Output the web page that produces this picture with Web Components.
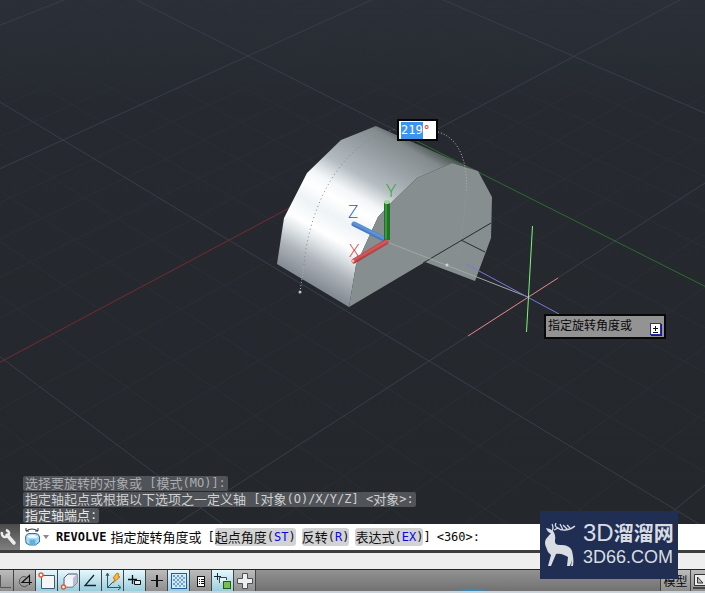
<!DOCTYPE html>
<html lang="zh-CN">
<head>
<meta charset="utf-8">
<title>REVOLVE</title>
<style>
html, body { margin: 0; height: 100%; overflow: hidden; }
body { font-family: "Liberation Sans", "Noto Sans CJK SC", sans-serif; font-size: 13px; }
</style>
</head>
<body>
<cad-app></cad-app>
<script>
const define = (name, html, setup) => customElements.define(name, class extends HTMLElement {
  connectedCallback() {
    if (this.shadowRoot) return;
    const t = document.createElement('template');
    t.innerHTML = html;
    this.attachShadow({ mode: 'open' }).append(t.content.cloneNode(true));
    if (setup) setup(this, this.shadowRoot);
  }
});

// Perspective ground grid: a is the red-axis direction, b the green-axis direction.
function project(a, b) {
  const t = (b + 1) / 2, s = a, d = 1 - 0.1576 * t - 0.0773 * s;
  return [((270.1 * t - 189.9 * s + 248) / d).toFixed(1), ((147 * t + 73.2 * s + 56) / d).toFixed(1)];
}
function gridPaths() {
  let minor = '', major = '';
  for (let i = -20; i <= 20; i++) {
    const k = i / 5;
    const seg = `M${project(k, -5)}L${project(k, i ? 3 : 0)}M${project(-5, k)}L${project(i ? 3.6 : 0, k)}`;
    if (i % 5) minor += seg; else major += seg;
  }
  return `<path d="${minor}" stroke="#2a2f36"/><path d="${major}" stroke="#373e49"/>
    <path d="M${project(0, 0)}L${project(3, 0)}" stroke="#752b30"/><path d="M${project(0, 0)}L${project(0, 3)}" stroke="#2d6a31"/>`;
}

define('cad-scene', `
<style>
:host { display: block; width: 100%; height: 100%; }
svg { display: block; width: 100%; height: 100%; }
text { font: 300 17px Lato, "Noto Sans", sans-serif; }
</style>
<svg viewBox="0 0 705 524" preserveAspectRatio="xMidYMid slice" fill="none" role="img" aria-label="三维视图">
  <defs>
    <linearGradient id="sky" x2="0" y2="1"><stop stop-color="#2b2f37"/><stop offset=".2" stop-color="#262a30"/><stop offset="1" stop-color="#24282d"/></linearGradient>
    <linearGradient id="side" gradientUnits="userSpaceOnUse" x1="277" y1="264" x2="366" y2="108">
      <stop stop-color="#858b92"/><stop offset=".12" stop-color="#adb3b9"/><stop offset=".22" stop-color="#e2e7ea"/>
      <stop offset=".28" stop-color="#fff"/><stop offset=".39" stop-color="#eef3f5"/><stop offset=".48" stop-color="#fff"/><stop offset=".55" stop-color="#f3f6f8"/>
      <stop offset=".66" stop-color="#b4bcc1"/><stop offset=".78" stop-color="#9ba3a8"/><stop offset=".92" stop-color="#838b8e"/><stop offset=".96" stop-color="#646d6b"/><stop offset="1" stop-color="#47534a"/>
    </linearGradient>
    <linearGradient id="bl" gradientUnits="userSpaceOnUse" x1="370" y1="227" x2="366" y2="235"><stop stop-color="#3465ae"/><stop offset=".4" stop-color="#6299e0"/><stop offset="1" stop-color="#28569f"/></linearGradient>
    <linearGradient id="rd" gradientUnits="userSpaceOnUse" x1="368" y1="248" x2="372" y2="255"><stop stop-color="#a83034"/><stop offset=".4" stop-color="#d65c5f"/><stop offset="1" stop-color="#96282b"/></linearGradient>
  </defs>
  <rect width="705" height="524" fill="url(#sky)"/>
  <g id="grid"></g>
  <path d="M277 264L284 218L307 173L341 140L376 126L478 171L452 163L417 178L392 202L378 217L356 265L349 307Z" fill="url(#side)"/>
  <path d="M349 307L356 265L378 217L392 202L417 178L452 163L478 171L492 197L491 238L475 281L425 262Z" fill="#868e90"/>
  <path d="M423 263L491 223M461 240L485 252" stroke="#252c2e"/>
  <path d="M387 242L528 297" stroke="#a3a7a6"/>
  <path d="M304 265C308 214 337 141 397 129" stroke="#7c8893" stroke-dasharray="1 3"/>
  <path d="M300 292L304 265M438 132C463 139 468 170 466 192" stroke="#b2b5b7" stroke-dasharray="1 2"/>
  <path d="M466 192Q465 220 457 255" stroke="#959fa0" stroke-dasharray="1 2"/>
  <circle cx="300" cy="292" r="1.5" fill="#c0c4c4"/><circle cx="447" cy="265" r="1.5" fill="#d0d5d5"/>
  <path d="M354 224L386 240" stroke="url(#bl)" stroke-width="5" stroke-linecap="round"/>
  <path d="M387 202V240" stroke="#1e7422" stroke-width="6"/><path d="M386 203V239" stroke="#429344" stroke-width="2"/>
  <path d="M354 261L386 242" stroke="url(#rd)" stroke-width="5" stroke-linecap="round"/>
  <ellipse cx="387" cy="202" rx="3" ry="2" fill="#9bd69b"/><circle cx="353" cy="261" r="1.5" fill="#f4b2b0"/>
  <text x="386" y="197" fill="#2ba035">Y</text><text x="348" y="218" fill="#245fc0">Z</text><text x="349" y="257" fill="#d6383c">X</text>
  <path d="M468 336L558 278" stroke="#e77f85"/><path d="M466 264L559 314" stroke="#7778dd"/><path d="M532.500 226L526.500 332" stroke="#80f280"/>
</svg>`, (el, root) => { root.getElementById('grid').innerHTML = gridPaths(); });

define('angle-input', `
<style>
:host { display: flex; align-items: center; box-sizing: border-box; width: 41px; height: 22px; padding-left: 2px; border: 2px solid #050505; background: #fff; color: #e02020; font: 12px "DejaVu Sans Mono", monospace; }
input { width: 22px; height: 17px; padding: 0; border: 0; background: #3c94ee; color: #fff; font: inherit; outline: 0; }
</style><input aria-label="角度" value="219"><span>°</span>`);

define('prompt-tip', `
<style>
:host { display: flex; align-items: center; justify-content: space-between; box-sizing: border-box; width: 122px; height: 25px; padding: 0 3px 0 2px; border: 2px solid #080808; background: #939393; color: #080808; font: 12px/18px "Noto Sans CJK SC", sans-serif; }
span { padding-bottom: 3px; }
button { width: 11px; height: 12px; padding: 0; border: 1px solid #2a2aa5; background: #fff; margin-top: 4px; box-shadow: 1px 1px #171794; }
svg { display: block; }
</style><span><slot></slot></span><button aria-label="选项"><svg width="9" height="10"><path d="M2 4.500H7M4.500 2V7M2 8.500H7" stroke="#111"/></svg></button>`);

// Splits a string so Latin runs get the monospace face at its own size.
const mixed = s => s.replace(/[^\u2e80-\u9fff]+/g, m => `<i>${m.replace(/</g, '&lt;').replace(/>/g, '&gt;')}</i>`);

define('history-line', `
<style>
:host { display: block; width: max-content; height: 15px; padding: 0 2px; border-radius: 2px; background: #505357; }
div { display: flex; white-space: pre; font: 13px/13px "Noto Sans CJK SC", sans-serif; }
i { font: 12px/14px "DejaVu Sans Mono", monospace; }
</style><div id="t"></div>`, (el, root) => { root.getElementById('t').innerHTML = mixed(el.getAttribute('text')).replace(/(^|<\/i>)([^<]+)/g, '$1<span>$2</span>'); });

define('command-option', `
<style>
:host { display: block; }
button { display: flex; height: 18px; padding: 0; border: 0; border-radius: 3px; background: #d3d3d3; color: #111; font: 13px/18px "Noto Sans CJK SC", sans-serif; }
i { font: 12px/19px "DejaVu Sans Mono", monospace; }
b { font-weight: 400; color: #0909e0; }
</style><button><slot></slot><i>(<b></b>)</i></button>`, (el, root) => { root.querySelector('b').textContent = el.getAttribute('key'); });

define('command-bar', `
<style>
:host { display: flex; align-items: center; height: 26px; background: #fff; color: #080808; font: 13px/18px "Noto Sans CJK SC", sans-serif; border-bottom: 3px solid #3d3d3d; }
button { border: 0; padding: 0; background: none; display: block; }
.tool { width: 20px; height: 26px; background: linear-gradient(#4a4a4a, #808080); }
.cmd { display: flex; align-items: center; gap: 2px; padding: 0 6px 0 4px; }
svg { display: block; }
.line { display: flex; align-items: center; white-space: nowrap; }
i, b { font: 12px/18px "DejaVu Sans Mono", monospace; }
b { font-weight: 700; }
.line > span { margin: 0 6px 0 4px; }
.opts { display: flex; gap: 6px; }
.rest { display: flex; gap: 6px; }
</style>
<button class="tool" aria-label="自定义"><svg width="20" height="26" fill="none"><path d="M7 11L14 19" stroke="#ececec" stroke-width="3.500" stroke-linecap="round"/><path d="M2 8C1 13 5 14 8 12C10 9 9 7 6 6" stroke="#ececec" stroke-width="2.500"/></svg></button>
<button class="cmd" aria-label="最近使用的命令"><svg width="17" height="20" fill="none"><path d="M2 4Q8 0 14 4M2 1v3h3M14 1v3h-3" stroke="#333"/><path d="M1.500 10Q2 7 5 6.500H12Q15 7 15.500 10V15L11.500 18H5.500L2 16Z" fill="#a9d8f2" stroke="#3573a0"/><path d="M3 9.500Q8 6 14 9.500L12 11H5Z" fill="#eef9ff"/><path d="M5.500 12.500H11.500V17.500H5.500Z" fill="#5fb0df"/></svg><svg width="7" height="6"><path d="M0 1H6L3 5Z" fill="#8d8884"/></svg></button>
<div class="line"><b>REVOLVE</b><span>指定旋转角度或</span><i>[</i>
<div class="opts"><command-option key="ST">起点角度</command-option><command-option key="R">反转</command-option><command-option key="EX">表达式</command-option></div><div class="rest"><i>]</i><i>&lt;360>:</i></div></div>`);

define('status-toggle', `
<style>
:host { display: block; flex: none; width: 22px; height: 21px; }
:host([partial]) { width: 14px; }
:host([wide]) { width: 30px; }
button { display: flex; align-items: center; justify-content: center; width: 100%; height: 100%; padding: 0; border: 0; border-right: 1px solid #444; background: linear-gradient(#bcbcbc, #8e8e8e); color: #080808; font: 12px/20px "Noto Sans CJK SC", sans-serif; overflow: hidden; white-space: nowrap; }
button[aria-pressed=true] { background: linear-gradient(#e6f8fc, #9acddd); }
svg { display: block; flex: none; }
</style><button><svg width="20" height="20" fill="none"></svg><slot></slot></button>`, (el, root) => {
  const b = root.querySelector('button'), svg = root.querySelector('svg'), icon = el.getAttribute('icon');
  if (el.hasAttribute('label')) b.setAttribute('aria-label', el.getAttribute('label'));
  b.setAttribute('aria-pressed', el.hasAttribute('on'));
  if (icon) svg.innerHTML = icons[icon]; else svg.remove();
});

const icons = {
  ortho: '<path d="M3.500 4V16.500H14" stroke="#555"/>',
  polar: '<path d="M13 14A5 5 0 1 1 11 6" stroke="#555"/><path d="M17 11.500H7L14.500 4.500V14" stroke="#111" stroke-width="1.200"/>',
  osnap: '<path d="M4.500 4.500H17.500V17.500H4.500Z" fill="#f3f5f6" stroke="#405b6c"/><circle cx="4" cy="4" r="2" fill="#fff" stroke="#e76232" stroke-width="1.500"/>',
  osnap3: '<path d="M5 7L9 3H18V12L14 16H5Z" fill="#eef0f7" stroke="#50566c"/><path d="M14 7L18 3V12L14 16Z" fill="#b9bfd0"/><path d="M6 7.500h7.500v8H6Z" fill="#f3f4f8"/><circle cx="4.500" cy="16" r="2" fill="#fff" stroke="#e05a30" stroke-width="1.500"/>',
  track: '<path d="M13 4L4 14.500H15" stroke="#18232a" stroke-width="1.300"/>',
  ducs: '<path d="M4.500 3V16.500H17M4 17L13 8M3 5l1.500-3L6 5M15 14l3 2.500L15 19" stroke="#315565"/><path d="M14 2L10 7L12 8L10 12L17 6L15 5L16 3Z" fill="#f6b83b" stroke="#cb7b22"/>',
  dyn: '<path d="M3 8.500H12M7.500 4V13" stroke="#0c1216" stroke-width="1.300"/><path d="M9.500 9.500H15.500V13.500H9.500Z" fill="#d6eef4" stroke="#111"/>',
  lwt: '<path d="M4 9.500H16" stroke="#111"/><path d="M10 4V16" stroke="#111" stroke-width="2"/>',
  tpy: '<rect x="2.500" y="2.500" width="15" height="15" fill="#d5ebff" stroke="#265995"/><path d="M4 5H16M4 9H16M4 13H16" stroke="#669fd8" stroke-width="2" stroke-dasharray="2 2"/><path d="M6 7H16M6 11H16M6 15H16" stroke="#76abe0" stroke-width="2" stroke-dasharray="2 2"/>',
  qp: '<rect x="6.500" y="5.500" width="7" height="10" fill="#fff" stroke="#111"/><path d="M8 8.500H9M10 8.500H13M8 10.500H9M10 10.500H13M8 12.500H9M10 12.500H13" stroke="#111"/>',
  cycle: '<path d="M1 5.500H8M4.500 2V9" stroke="#172b35"/><path d="M6.500 12V6.500H13.500V9" fill="#e9f3f4" stroke="#344b58"/><rect x="10.500" y="10.500" width="7" height="7" fill="#79bf4b" stroke="#245b1d"/>',
  plus: '<path d="M7.500 2.500H12.500V7.500H17.500V12.500H12.500V17.500H7.500V12.500H2.500V7.500H7.500Z" fill="#eee" stroke="#4d5057"/>',
  layout: '<path d="M2.500 3.500H20V14.500H2.500Z" fill="#eee" stroke="#333"/><path d="M5.500 6V12H11Z" fill="#bbb" stroke="#333"/><path d="M1 17H20" stroke="#444" stroke-width="2"/>'
};

define('status-bar', `
<style>
:host { display: flex; height: 21px; border-top: 1px solid #242424; border-bottom: 2px solid #c9d4dd; background: linear-gradient(#929292, #717171); }
.space { flex: 1; background: radial-gradient(ellipse 20px 3px at 216px 100%, #2e8fcb, transparent); }
.end { border-left: 1px solid #444; display: flex; flex: none; width: 44px; overflow: hidden; }
</style>
<status-toggle partial icon="ortho" label="正交"></status-toggle><status-toggle icon="polar" label="极轴"></status-toggle><status-toggle on icon="osnap" label="对象捕捉"></status-toggle><status-toggle on icon="osnap3" label="三维对象捕捉"></status-toggle><status-toggle on icon="track" label="对象追踪"></status-toggle><status-toggle on icon="ducs" label="动态UCS"></status-toggle><status-toggle on icon="dyn" label="动态输入"></status-toggle><status-toggle icon="lwt" label="线宽"></status-toggle><status-toggle on icon="tpy" label="透明度"></status-toggle><status-toggle icon="qp" label="快捷特性"></status-toggle><status-toggle on icon="cycle" label="选择循环"></status-toggle><status-toggle icon="plus" label="注释监视器"></status-toggle>
<div class="space"></div><div class="end"><status-toggle wide>模型</status-toggle><status-toggle icon="layout" label="布局"></status-toggle></div>`);

define('site-badge', `
<style>
:host { display: flex; align-items: center; box-sizing: border-box; width: 138px; height: 68px; padding: 0 4px; gap: 6px; background: #202e54; color: #d9dde2; font: 18px/20px "Liberation Sans", sans-serif; }
svg { display: block; flex: none; }
.t { display: flex; flex-direction: column; gap: 2px; white-space: nowrap; }
.t div { height: 23px; line-height: 23px; }
.top { display: flex; font: 700 20px/23px "Noto Sans CJK SC", sans-serif; }
.top i { font: 24px/24px "Liberation Sans", sans-serif; }
</style>
<svg width="33" height="44" fill="none"><path d="M9 8L6 6L2 5C3 8 5 10 7 10L2 16Q0 20 2 24L4 29L7 32L4 43H7L12 31C17 30 20 32 24 34L23 43H26L28 37L27 43H29C30 37 29 33 28 28C26 23 22 22 16 22Q10 22 11 17Q12 12 9 8Z" fill="#d9dde2"/><path d="M8 8C10 5 9 3 8 1M10 7L14 5C11 4 11 2 12 0M14 5C17 8 25 8 31 3M19 7L16 1M23 6L19 2M26 5L23 2" stroke="#d9dde2" stroke-width="1.300"/></svg>
<div class="t"><div class="top"><i>3D</i><span>溜溜网</span></div><div>3D66.COM</div></div>`);

define('cad-app', `
<style>
:host { display: flex; flex-direction: column; height: 100vh; position: relative; background: #eee; overflow: hidden; }
.view { flex: 1; min-height: 0; position: relative; }
cad-scene { position: absolute; inset: 0; }
angle-input { position: absolute; left: 397px; top: 119px; }
prompt-tip { position: absolute; left: 544px; top: 314px; }
.history { position: absolute; left: 23px; bottom: 1px; display: flex; flex-direction: column; gap: 1px; color: #e5e5e5; }
.old { color: #aaadb0; }
.mid { color: #ced0d2; }
.gap { height: 16px; background: #eee; }
site-badge { position: absolute; right: 27px; bottom: 14px; }
</style>
<div class="view"><cad-scene></cad-scene><angle-input></angle-input><prompt-tip>指定旋转角度或</prompt-tip>
<div class="history"><history-line class="old" text="选择要旋转的对象或 [模式(MO)]:"></history-line><history-line class="mid" text="指定轴起点或根据以下选项之一定义轴 [对象(O)/X/Y/Z] <对象>:"></history-line><history-line text="指定轴端点:"></history-line></div></div>
<command-bar></command-bar><div class="gap"></div><status-bar></status-bar><site-badge></site-badge>`);
</script>
</body>
</html>
